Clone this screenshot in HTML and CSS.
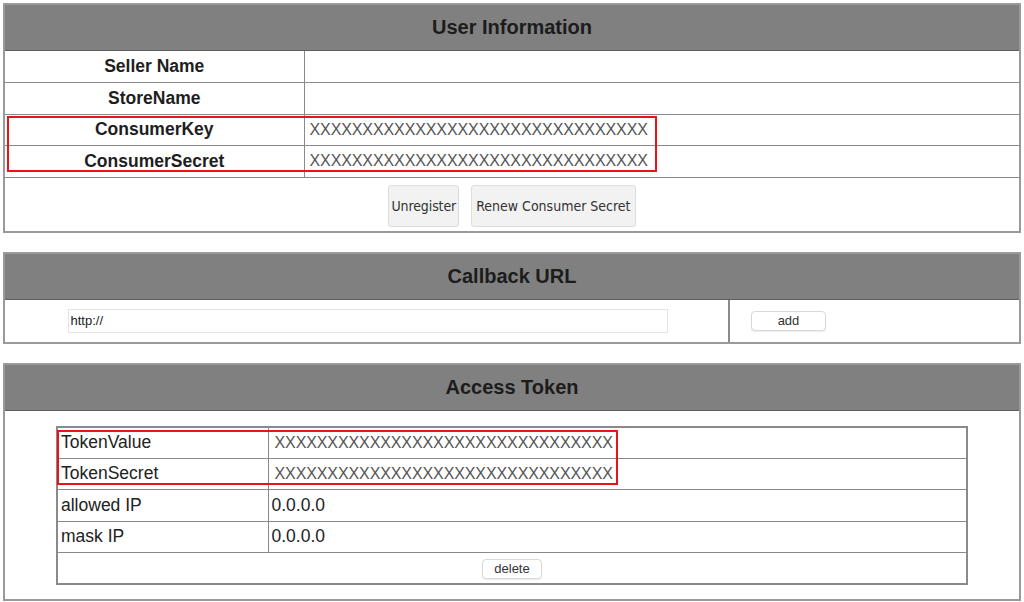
FILE: index.html
```html
<!DOCTYPE html>
<html lang="en">
<head>
  <meta charset="UTF-8" />
  <title>API Settings</title>
  <link rel="stylesheet" href="styles.css">
</head>
<body>

  <!-- User Information -->
  <div class="panel">
    <div class="panel-title">User Information</div>
    <div class="mark-wrap">
      <table class="info">
        <tr><th>Seller Name</th><td></td></tr>
        <tr><th>StoreName</th><td></td></tr>
        <tr><th>ConsumerKey</th><td class="secret">XXXXXXXXXXXXXXXXXXXXXXXXXXXXXXXX</td></tr>
        <tr><th>ConsumerSecret</th><td class="secret">XXXXXXXXXXXXXXXXXXXXXXXXXXXXXXXX</td></tr>
      </table>
      <div class="mark mark-consumer"></div>
    </div>
    <div class="actions">
      <button class="btn btn-big btn-unreg">Unregister</button>
      <button class="btn btn-big btn-renew">Renew Consumer Secret</button>
    </div>
  </div>

  <!-- Callback URL -->
  <div class="panel">
    <div class="panel-title">Callback URL</div>
    <div class="callback">
      <div class="callback-input">
        <input type="text" class="url" value="http://">
      </div>
      <div class="callback-add">
        <button class="btn btn-small btn-add">add</button>
      </div>
    </div>
  </div>

  <!-- Access Token -->
  <div class="panel">
    <div class="panel-title">Access Token</div>
    <div class="token-body">
      <div class="mark-wrap">
        <table class="token">
          <tr><td class="key">TokenValue</td><td class="secret">XXXXXXXXXXXXXXXXXXXXXXXXXXXXXXXX</td></tr>
          <tr><td class="key">TokenSecret</td><td class="secret">XXXXXXXXXXXXXXXXXXXXXXXXXXXXXXXX</td></tr>
          <tr><td class="key">allowed IP</td><td>0.0.0.0</td></tr>
          <tr><td class="key">mask IP</td><td>0.0.0.0</td></tr>
          <tr><td colspan="2" class="center"><button class="btn btn-small btn-delete">delete</button></td></tr>
        </table>
        <div class="mark mark-token"></div>
      </div>
    </div>
  </div>

</body>
</html>
```

FILE: styles.css
```css
* {
  box-sizing: border-box;
}

body {
  margin: 3px 3px 0 3px;
  font-family: "Liberation Sans", Arial, sans-serif;
  background: #fff;
  color: #222;
}

.panel {
  width: 1018px;
  border: 2px solid #9a9a9a;
  margin-bottom: 19px;
  background: #fff;
}

.panel-title {
  height: 46px;
  line-height: 45px;
  background: #808080;
  border-bottom: 1px solid #5e5e5e;
  text-align: center;
  font-size: 20px;
  font-weight: bold;
  color: #1c1c1c;
}

.mark-wrap {
  position: relative;
}

/* red highlight boxes */
.mark {
  position: absolute;
  border: 2px solid #e8141a;
  pointer-events: none;
}

.mark-consumer {
  left: 2px;
  top: 65px;
  width: 650px;
  height: 56px;
}

.mark-token {
  left: 1px;
  top: 4px;
  width: 561px;
  height: 55px;
}

table {
  border-collapse: collapse;
  width: 100%;
}

.info th,
.info td {
  height: 31.5px;
  border-bottom: 1px solid #8a8a8a;
  font-size: 17.5px;
  padding: 0;
}

.info th {
  width: 299px;
  border-right: 1px solid #8a8a8a;
  text-align: center;
  font-weight: bold;
  color: #1e1e1e;
}

.info td {
  padding-left: 5px;
}

.secret {
  color: #555;
}

.info td.secret,
.token td.secret {
  font-size: 16px;
  letter-spacing: -0.1px;
}

.actions {
  height: 53px;
  display: flex;
  justify-content: center;
  align-items: flex-start;
  gap: 12px;
  padding-top: 7px;
}

.btn {
  font-family: "DejaVu Sans Condensed", "DejaVu Sans", sans-serif;
  color: #333;
  cursor: pointer;
}

.btn-big {
  height: 42px;
  font-size: 14px;
  background: #f2f2f2;
  border: 1px solid #dcdcdc;
  border-radius: 3px;
}

.btn-unreg {
  padding: 0 2px;
  letter-spacing: -0.1px;
}

.btn-renew {
  padding: 0 4px;
}

.btn-small {
  height: 20px;
  font-family: "Liberation Sans", Arial, sans-serif;
  font-size: 13px;
  background: #fff;
  border: 1px solid #d8d8d8;
  border-radius: 4px;
  box-shadow: 0 1px 1px rgba(0,0,0,0.08);
  padding: 0;
}

.btn-add {
  width: 75px;
}

.btn-delete {
  width: 60px;
}

.callback {
  display: flex;
  height: 42px;
}

.callback-input {
  width: 725px;
  border-right: 2px solid #8a8a8a;
  display: flex;
  align-items: center;
  justify-content: center;
  padding-left: 2px;
}

.url {
  width: 600px;
  height: 24px;
  border: 1px solid #e3e3e3;
  font-family: "Liberation Sans", Arial, sans-serif;
  font-size: 13px;
  color: #222;
  padding: 0 2px;
  outline: none;
}

.callback-add {
  flex: 1;
  display: flex;
  align-items: center;
  padding-left: 21px;
}

.token-body {
  padding: 15px 0 14px 51px;
}

.token {
  width: 912px;
  border: 2px solid #8a8a8a;
  border-collapse: collapse;
}

.token td {
  height: 31.5px;
  border-bottom: 1px solid #8a8a8a;
  font-size: 17.5px;
  padding: 0 0 0 3px;
}

.token td.key {
  width: 211px;
  border-right: 1px solid #8a8a8a;
  color: #222;
}

.token td.secret {
  padding-left: 6px;
}

.token td.center {
  text-align: center;
  height: 31px;
  border-bottom: none;
  padding-left: 0;
}
```
